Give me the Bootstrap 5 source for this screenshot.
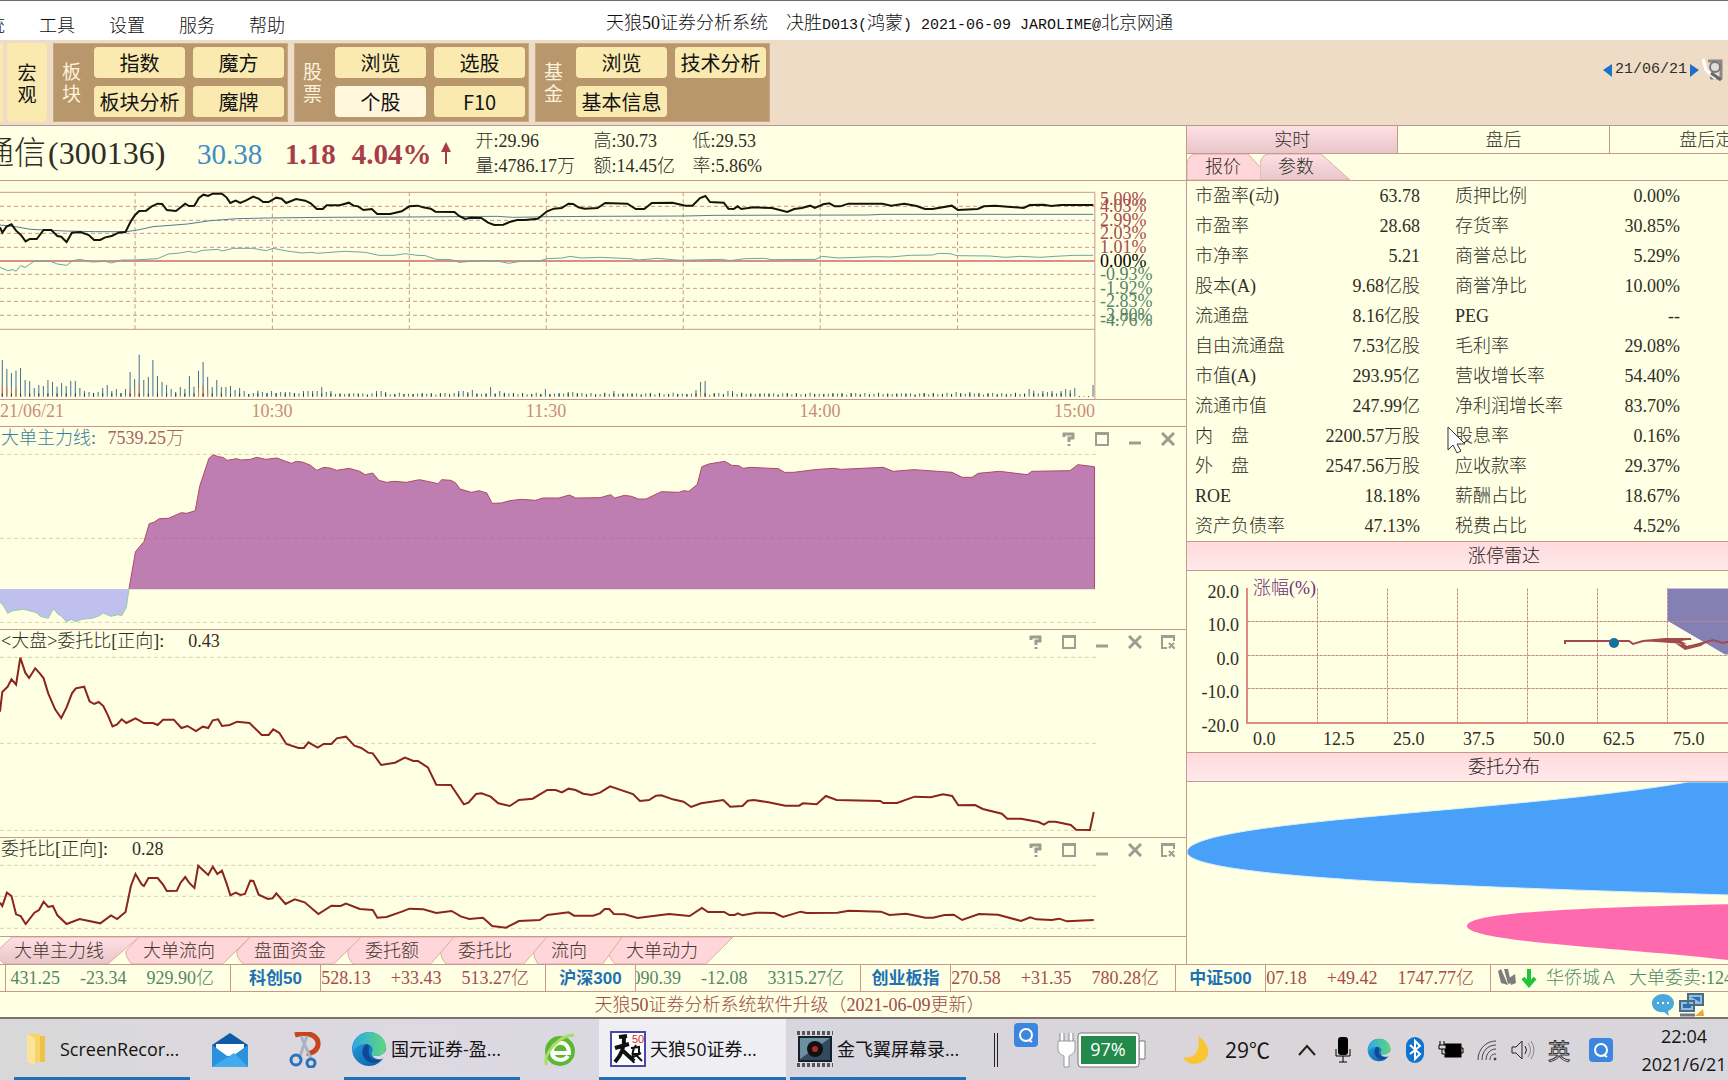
<!DOCTYPE html>
<html lang="zh-CN">
<head>
<meta charset="utf-8">
<meta name="viewport" content="width=device-width, initial-scale=1">
<title>天狼50证券分析系统</title>
<link href="https://cdn.jsdelivr.net/npm/bootstrap@5.3.0/dist/css/bootstrap.min.css" rel="stylesheet">
<script src="https://cdn.jsdelivr.net/npm/bootstrap@5.3.0/dist/js/bootstrap.bundle.min.js"></script>
<style>
:root{--rule:#c9988c;--cream:#ffffe3;--ink:#2e2e28;--pink:#ffd7da}
body{font-family:"Liberation Serif","Noto Sans CJK SC",serif;font-weight:300;font-size:18px;line-height:26px;color:var(--ink);background:var(--cream);overflow:hidden}
button{font:inherit;color:inherit;background:none;border:0;padding:0}
a{color:inherit;text-decoration:none}
.mono{font-family:"Liberation Mono",monospace;font-size:15px}
.rule-b{border-bottom:1px solid var(--rule)}
.rule-r{border-right:1px solid var(--rule)}
.clip{overflow:hidden;white-space:nowrap}
svg{display:block}
/* menu bar */
.menubar{height:40px;background:#fff;border-top:1px solid #6d6b6d;color:#101010;position:relative}
.menus{gap:34px;margin-left:-31px;padding-top:12px}
.apptitle{padding-top:9px;left:0;right:0;margin-left:51px}
/* toolbar */
.toolbar{height:86px;background:#eedcc6;border-bottom:1px solid #b39a90;padding:3px 0 3px;gap:6px;font-family:"Noto Sans CJK SC",sans-serif}
.chip{background:#faeab0;border-radius:4px;color:#141414;font-size:20px;line-height:28px;font-weight:400}
.chip.on{background:#fff6dc}
.chip-tall{width:40px;font-size:19px;line-height:22px}
.chip-edge{width:3px;margin-right:-2px}
.tgroup{background:#b8976c;border:1px solid #c9a985;width:235px;padding:3px 3px 4px 8px;gap:13px}
.tlabel{color:#fdf3da;font-size:19px;line-height:22px;width:19px;font-weight:400}
.tgrid{display:grid;grid-template-columns:1fr 1fr;grid-template-rows:31px 31px;gap:8px;width:190px}
.datepick{padding:15px 2px 0 0;gap:2px;line-height:24px}
/* layout */
.leftcol{flex:1186 1 0;min-width:0}
.rightcol{flex:541 1 0;min-width:0;border-left:1px solid var(--rule)}
.rightwide{width:634px}
/* quote header */
.quote{height:55px;gap:0;white-space:nowrap}
.qname{font-size:32px;line-height:54px;width:201px;margin-left:-19px;padding-left:1px}
.qname span{margin-left:2px}
.qnum{font-size:29px;line-height:56px}
.qlast{color:#3f8cc8;width:88px;margin-left:15px}
.qup{color:#a83c4a;font-weight:700}
.qstats{display:grid;grid-template-columns:118px 99px auto;line-height:23px;margin-left:24px;padding-top:4px}
/* charts */
.plotw{flex:1 1 0;min-width:0}
.axisw{flex:0 0 90px;position:relative}
.axisw span{position:absolute;left:4px;line-height:18px}
.up{color:#a54c4e}.dn{color:#548668}
.chart{width:100%}
.chart *{vector-effect:non-scaling-stroke;fill:none}
.gd{stroke:#c9988a;stroke-dasharray:4 3}
.gl{stroke:#d8d4b4;stroke-dasharray:4 3}
.times{color:#c88c7e;width:calc(100% - 91px);height:26px;line-height:22px;text-align:center}
.phead{height:24px;line-height:23px;padding-left:1px;padding-right:2px}
.phead button{width:33px;display:flex;justify-content:center}
.phead svg{width:14px;height:14px;fill:none;stroke:#9b9e92;stroke-width:2}
/* slanted tabs */
.stabs{height:27px}
.stab{position:relative;padding:0 21px 0 18px;line-height:28px;color:#45342f}
.stab svg{position:absolute;left:0;top:0;width:calc(100% + 14px);height:27px;z-index:-1}
.stab path{fill:var(--pink);stroke:#d9aea4;vector-effect:non-scaling-stroke}
.stab.on path{fill:url(#tabOn)}
/* right panel */
.rtabs{height:28px}
.rtabs button{width:212px;line-height:26px}
.rtabs .on{background:linear-gradient(#ffe0e4,#e8c6ca)}
.rsub{height:27px;position:relative}
.rsub button{position:relative;padding-left:18px;line-height:27px;width:73px;text-align:left}
.rsub svg{position:absolute;left:0;top:0;z-index:-1}
.facts{width:485px;margin-left:8px;line-height:29px}
.facts td,.facts th{padding:1px 0 0;font-weight:300;height:30px}
.band{height:30px;border-top:1px solid var(--rule);border-bottom:1px solid var(--rule);background:linear-gradient(#ffdadd,#ffe9ea);text-align:center;line-height:29px;color:#2a1c1c}
.band-t{fill:#2e2e28;font-size:18px}
/* ticker */
.ticker{border-top:1px solid var(--rule);height:28px;line-height:27px}
.tname{width:90px;text-align:center;color:#1d72b4;font-family:"Liberation Sans","Noto Sans CJK SC",sans-serif;font-size:17px;font-weight:700}
.tvals{width:225px;gap:20px;padding-right:16px}
.notice{height:27px;border-bottom:2px solid #80706e;color:#9a4c4a;position:relative;line-height:26px}
.notice .trayico{position:absolute;right:23px;top:1px;gap:4px}
/* taskbar */
.taskbar{height:61px;background:linear-gradient(90deg,#d9d8d8,#dcd9e2 25%,#d7d6de 50%,#dad5d8 75%,#d8d7dc);font-family:"Open Sans","Noto Sans CJK SC",sans-serif;font-size:18px;color:#141414;font-weight:400;padding-left:14px}
.task{height:61px;width:176px;border-bottom:3px solid #1f70b8;padding:2px 0 0 7px;gap:4px}
.task.on{width:187px;background:#efeef3;padding-left:11px}
.pin{width:71px;height:61px}
.tasks{gap:4px;flex:none}
.slot{width:36px;display:flex;justify-content:center}
.clock{width:118px;line-height:28px;font-size:18px}
.ime{font-size:22px;color:#fff;-webkit-text-stroke:1px #333}
.sep{border-left:1px solid #222;border-right:1px solid #222;width:4px;height:34px;margin-left:28px}
.mouse{position:absolute;left:260px;top:300px}
</style>
</head>
<body>
<svg width="0" height="0" class="position-absolute">
  <defs>
    <linearGradient id="edgeA" x1="0" y1="0" x2="1" y2="1"><stop offset="0" stop-color="#2aa4e0"/><stop offset="1" stop-color="#0b57a4"/></linearGradient>
    <linearGradient id="edgeB" x1="0" y1="0" x2="1" y2="0"><stop offset="0" stop-color="#2fa9e6"/><stop offset="1" stop-color="#5fd87c"/></linearGradient>
    <linearGradient id="tabOn" x1="0" y1="0" x2="0" y2="1"><stop offset="0" stop-color="#ffe0e4"/><stop offset="1" stop-color="#e8c6ca"/></linearGradient>
    <symbol id="edge" viewBox="0 0 36 36">
      <circle cx="18" cy="18" r="17" fill="url(#edgeA)"/>
      <path d="M2 15C4 5 12 1 18 1c11 0 17 8 17 15 0 6-5 9-10 9-4 0-5-2-4-4 2-4-1-8-6-8-6 0-11 3-13 8z" fill="url(#edgeB)"/>
      <path d="M14 14c-3 3-4 9 0 14 5 6 13 4 17 0-5 2-12 1-13-5-1-4 1-6 0-8-1-2-3-2-4-1z" fill="#0c4a94"/>
      <path d="M21 21c-1 2 0 4 4 4 4 0 8-2 10-6v6l-4 3c-5 1-11-1-10-7z" fill="#dcd9e0"/>
    </symbol>
    <symbol id="qapp" viewBox="0 0 24 24"><rect width="24" height="24" rx="4" fill="#3d86e0"/><circle cx="12" cy="12" r="6" fill="none" stroke="#fff" stroke-width="2"/><path d="M15 17l3 2" stroke="#fff" stroke-width="2"/></symbol>
    <symbol id="i-help" viewBox="0 0 14 14"><path d="M2 5V1M1 2h11M11 1v6M12 6H7v4M7 12v2" stroke-width="3"/></symbol>
    <symbol id="i-max" viewBox="0 0 14 14"><path d="M1 1h12v12H1zM1 2h12"/></symbol>
    <symbol id="i-min" viewBox="0 0 14 14"><path d="M1 11h12" stroke-width="3"/></symbol>
    <symbol id="i-x" viewBox="0 0 14 14"><path d="M1 1l12 12M13 1L1 13" stroke-width="3"/></symbol>
    <symbol id="i-pop" viewBox="0 0 14 14"><path d="M6 13H1V1h12v5M1 2h12M8 8l6 6M13 8l-5 5"/></symbol>
  </defs>
</svg>

<header class="menubar">
  <div class="apptitle position-absolute text-center">天狼50证券分析系统&ensp;&ensp;决胜<span class="mono">D013(</span>鸿蒙<span class="mono">) 2021-06-09 JAROLIME@</span>北京网通</div>
  <nav class="menus d-flex position-relative">
    <button>系统</button><button>工具</button><button>设置</button><button>服务</button><button>帮助</button>
  </nav>
</header>

<div class="toolbar d-flex">
  <div class="chip chip-edge"></div>
  <button class="chip chip-tall">宏<br>观</button>
  <div class="tgroup d-flex align-items-center"><div class="tlabel">板块</div>
    <div class="tgrid"><button class="chip">指数</button><button class="chip">魔方</button><button class="chip">板块分析</button><button class="chip">魔牌</button></div></div>
  <div class="tgroup d-flex align-items-center"><div class="tlabel">股票</div>
    <div class="tgrid"><button class="chip">浏览</button><button class="chip">选股</button><button class="chip on">个股</button><button class="chip">F10</button></div></div>
  <div class="tgroup d-flex align-items-center"><div class="tlabel">基金</div>
    <div class="tgrid"><button class="chip">浏览</button><button class="chip">技术分析</button><button class="chip">基本信息</button></div></div>
  <div class="datepick d-flex align-items-start ms-auto">
    <button aria-label="前一日"><svg width="11" height="24"><path d="M10 6v13L1 12z" fill="#1d72c8"/></svg></button>
    <span class="mono">21/06/21</span>
    <button aria-label="后一日"><svg width="11" height="24"><path d="M1 6v13l9-7z" fill="#1d72c8"/></svg></button>
    <svg width="24" height="24"><path d="M6 3h13v17H8" fill="none" stroke="#8d8784" stroke-width="3"/><circle cx="13" cy="9" r="5" fill="#ddd" stroke="#777" stroke-width="2"/><path d="M1 1l3 11 10 9" fill="none" stroke="#fff" stroke-width="3"/><path d="M9 15l10 7" stroke="#666" stroke-width="3"/></svg>
  </div>
</div>

<main class="d-flex">
  <section class="leftcol">
    <div class="quote d-flex rule-b">
      <div class="qname">通信<span>(300136)</span></div>
      <div class="qnum qlast">30.38</div>
      <div class="qnum qup me-3">1.18</div>
      <div class="qnum qup">4.04%</div>
      <svg width="12" height="54" class="ms-2"><path d="M6 38V20" stroke="#a83c4a" stroke-width="2"/><path d="M1 26l5-10 5 10z" fill="#a83c4a"/></svg>
      <div class="qstats"><span>开:29.96</span><span>高:30.73</span><span>低:29.53</span><span>量:4786.17万</span><span>额:14.45亿</span><span>率:5.86%</span></div>
    </div>

    <div class="d-flex rule-b">
      <div class="plotw">
        <svg class="chart" height="218" viewBox="0 3 2865 654" preserveAspectRatio="none">
          <path d="M0 37H2862V657M0 448H2862" stroke="#c9988c"/>
          <path class="gd" d="M0 79H2862M0 121H2862M0 160H2862M0 202H2862M0 283H2862M0 325H2862M0 364H2862M0 406H2862M353 37V448M712 37V448M1070 37V448M1428 37V448M1786 37V448M2144 37V448M2503 37V448"/>
          <path d="M0 243H2862" stroke="#d98f86" stroke-width="2"/>
          <polyline stroke="#6ea6a4" points="0,262 20,272 34,269 42,274 54,257 66,262 90,243 130,243 150,252 174,256 190,242 210,238 240,246 276,244 292,249 318,240 350,240 412,236 440,222 470,219 494,214 508,218 530,211 570,208 580,213 610,205 660,205 696,212 714,205 750,213 790,219 815,217 830,220 900,214 955,217 990,226 1030,226 1060,221 1090,226 1112,227 1140,238 1180,239 1200,247 1250,242 1300,243 1330,250 1360,244 1410,243 1430,236 1470,234 1490,229 1520,234 1568,232 1648,236 1668,240 1718,235 1778,241 1888,238 1908,242 1948,236 1998,235 2018,239 2133,238 2148,229 2193,234 2288,230 2328,231 2378,226 2438,225 2453,220 2483,221 2503,227 2588,228 2628,232 2668,229 2718,232 2758,229 2808,226 2858,226"/>
          <polyline stroke="#4d8090" points="0,135 40,140 80,148 170,153 250,155 330,155 360,150 400,140 490,132 550,122 620,116 700,114 850,112 1060,111 1300,109 1340,112 1440,110 1568,109 1788,108 1868,106 2268,105 2308,103 2858,103"/>
          <polyline stroke="#141408" stroke-width="2" points="0,142 6,158 17,140 30,133 42,152 54,164 67,184 78,177 96,177 114,150 134,150 150,168 160,170 174,186 188,158 210,156 232,165 246,180 262,180 275,172 292,168 310,158 328,156 342,124 353,105 364,93 382,92 398,78 412,71 424,72 436,90 460,93 484,71 494,78 508,77 520,54 532,44 544,48 556,41 580,41 592,52 602,69 616,62 628,69 642,62 662,50 676,56 688,66 702,66 722,53 736,56 748,69 774,57 798,62 812,70 828,87 844,87 854,76 888,76 912,68 924,77 936,79 950,90 972,87 986,102 1020,102 1050,94 1070,79 1092,77 1106,82 1126,86 1138,95 1188,96 1200,108 1216,117 1230,113 1258,114 1276,128 1292,135 1316,134 1332,126 1352,120 1372,120 1406,116 1430,94 1448,86 1468,84 1486,71 1498,72 1512,82 1528,86 1562,84 1582,69 1640,71 1662,87 1684,87 1704,69 1758,68 1792,77 1810,77 1830,54 1844,48 1856,66 1892,68 1904,86 1918,87 1928,79 1938,87 1970,82 2018,84 2058,96 2076,87 2096,84 2118,77 2130,84 2152,73 2168,70 2182,79 2196,79 2218,71 2306,71 2330,77 2364,71 2396,78 2418,87 2438,87 2488,77 2504,90 2556,87 2572,79 2602,77 2634,80 2676,84 2692,75 2728,74 2748,78 2774,75 2858,75"/>
          <g id="vol"></g>
        </svg>
      </div>
      <div class="axisw" id="pct"></div>
    </div>
    <div class="rule-b">
      <div class="times d-flex">
        <span class="text-start" style="flex:135 1 0">21/06/21</span><span style="flex:274 1 0">10:30</span><span style="flex:274 1 0">11:30</span><span style="flex:274 1 0">14:00</span><span class="text-end" style="flex:138 1 0">15:00</span>
      </div>
    </div>

    <div class="rule-b">
      <div class="phead d-flex"><span style="color:#3c7f9c">大单主力线:</span><span class="ms-2" style="color:#a5665e">&thinsp;7539.25万</span>
        <span class="d-flex align-items-center ms-auto"><button aria-label="帮助"><svg><use href="#i-help"/></svg></button><button aria-label="最大化"><svg><use href="#i-max"/></svg></button><button aria-label="最小化"><svg><use href="#i-min"/></svg></button><button aria-label="关闭"><svg><use href="#i-x"/></svg></button></span></div>
      <svg class="chart" height="178" viewBox="0 78 3099 534" preserveAspectRatio="none">
        <path class="gl" d="M0 88H2864M0 340H2864M0 592H2864"/>
        <polygon style="fill:#c0c0ee" points="0,492 0,532 8,540 20,565 34,557 62,553 96,563 104,573 126,580 140,551 150,566 162,575 174,591 186,583 198,590 214,583 244,579 260,572 270,564 290,574 308,569 318,572 330,548 337,492"/>
        <polyline stroke="#8fd0a0" points="0,532 8,540 20,565 34,557 62,553 96,563 104,573 126,580 140,551 150,566 162,575 174,591 186,583 198,590 214,583 244,579 260,572 270,564 290,574 308,569 318,572 330,548 337,492"/>
        <path style="fill:#bf7eb1" stroke="#b0486a" d="M337,492 354,380 376,350 390,296 402,292 416,281 440,280 474,263 488,265 510,257 522,183 546,100 558,89 570,95 582,97 594,106 618,101 630,105 655,103 670,97 695,103 724,99 744,108 762,115 774,109 790,111 810,120 828,136 846,127 862,129 880,136 912,130 940,139 954,149 974,144 990,166 1010,172 1030,169 1062,172 1096,164 1145,176 1154,164 1178,166 1190,173 1202,192 1232,202 1252,197 1272,204 1286,235 1310,234 1332,227 1362,223 1400,226 1418,219 1460,219 1488,210 1504,219 1568,218 1596,209 1606,219 1632,211 1650,214 1668,222 1688,222 1728,200 1774,202 1786,197 1800,199 1822,178 1834,125 1852,117 1894,109 1912,121 1930,122 1942,130 1960,127 2034,131 2050,142 2074,142 2128,134 2178,130 2198,133 2308,127 2334,139 2388,134 2488,142 2514,157 2540,157 2556,145 2612,139 2684,149 2696,139 2796,137 2816,119 2860,125 2860,492"/>
        <path d="M384 340H2860" stroke="#b56fa4" stroke-dasharray="4 3"/><path d="M337 490H2860" stroke="#b584ac" stroke-width="2"/>
      </svg>
    </div>

    <div class="rule-b">
      <div class="phead d-flex"><span>&lt;大盘&gt;委托比[正向]:</span><span style="margin-left:24px">0.43</span>
        <span class="d-flex align-items-center ms-auto"><button aria-label="帮助"><svg><use href="#i-help"/></svg></button><button aria-label="最大化"><svg><use href="#i-max"/></svg></button><button aria-label="最小化"><svg><use href="#i-min"/></svg></button><button aria-label="关闭"><svg><use href="#i-x"/></svg></button><button aria-label="弹出"><svg><use href="#i-pop"/></svg></button></span></div>
      <svg class="chart" height="183" viewBox="0 72 3099 549" preserveAspectRatio="none">
        <path class="gl" d="M0 82H2864M0 340H2864M0 601H2864"/>
        <polyline stroke="#8a241c" stroke-width="2" points="0,245 6,186 20,170 30,148 42,164 53,83 66,128 76,144 92,115 104,130 114,145 126,190 144,238 160,264 174,232 188,190 198,175 220,170 234,214 246,222 258,216 270,228 282,256 294,289 306,283 318,268 330,279 354,265 376,279 400,279 412,285 426,269 454,269 474,294 490,288 512,303 530,290 544,294 556,271 570,268 580,288 600,285 620,275 652,279 684,315 702,315 714,298 730,309 748,342 780,354 794,354 806,337 830,353 846,342 866,342 880,325 904,320 926,347 944,354 962,368 974,370 996,405 1032,398 1058,383 1080,393 1092,393 1118,412 1140,464 1178,465 1212,523 1224,518 1244,492 1258,490 1282,500 1302,520 1332,528 1356,510 1392,506 1430,480 1452,480 1468,487 1486,476 1504,480 1524,491 1546,495 1568,488 1594,469 1654,492 1672,513 1696,510 1714,497 1728,496 1758,508 1786,515 1806,531 1832,520 1890,510 1908,530 1940,528 1954,512 1970,510 2008,517 2052,527 2088,527 2098,520 2134,523 2158,498 2186,510 2300,513 2308,519 2344,519 2390,500 2432,502 2464,493 2488,498 2504,526 2548,525 2568,537 2618,551 2632,566 2668,566 2714,576 2728,584 2740,575 2758,575 2798,585 2812,599 2848,600 2858,546"/>
      </svg>
    </div>

    <div class="rule-b">
      <div class="phead d-flex"><span>委托比[正向]:</span><span style="margin-left:24px">0.28</span>
        <span class="d-flex align-items-center ms-auto"><button aria-label="帮助"><svg><use href="#i-help"/></svg></button><button aria-label="最大化"><svg><use href="#i-max"/></svg></button><button aria-label="最小化"><svg><use href="#i-min"/></svg></button><button aria-label="关闭"><svg><use href="#i-x"/></svg></button><button aria-label="弹出"><svg><use href="#i-pop"/></svg></button></span></div>
      <svg class="chart" height="74" viewBox="0 696 3099 222" preserveAspectRatio="none">
        <path class="gl" d="M0 706H2864M0 799H2864M0 895H2864"/>
        <polyline stroke="#8a241c" stroke-width="2" points="0,818 6,828 18,788 30,798 42,853 54,858 67,882 90,848 102,840 114,815 126,831 138,828 150,856 174,882 208,867 262,880 290,856 306,867 328,846 342,768 354,732 370,763 376,768 388,744 412,744 426,764 436,783 462,782 472,758 484,741 494,758 508,774 518,707 530,720 544,735 556,710 568,732 580,722 592,760 602,796 616,788 628,795 640,792 654,752 662,753 676,794 700,807 712,805 722,790 746,822 770,808 796,817 832,852 866,827 890,828 904,821 940,837 974,840 986,863 1010,861 1050,845 1070,836 1106,838 1140,849 1180,843 1204,859 1226,867 1262,863 1286,888 1322,893 1356,873 1410,870 1430,855 1486,847 1500,857 1550,857 1568,850 1580,837 1592,837 1604,852 1632,853 1666,864 1748,852 1802,858 1834,834 1850,846 1892,846 1906,855 1920,855 1928,850 1940,856 1976,848 2024,849 2046,861 2092,845 2108,849 2188,848 2218,842 2302,845 2324,855 2368,851 2418,863 2438,863 2468,855 2492,854 2514,870 2558,852 2608,854 2668,873 2692,862 2708,868 2748,870 2768,866 2788,874 2858,870"/>
      </svg>
    </div>

    <nav class="stabs d-flex position-relative" id="stabs" style="margin-left:-4px;z-index:0"></nav>
  </section>

  <aside class="rightcol clip position-relative">
    <div class="rightwide">
      <div class="rtabs d-flex rule-b"><button class="on rule-r">实时</button><button class="rule-r">盘后</button><button>盘后定价</button></div>
      <div class="rsub d-flex rule-b" style="z-index:0">
        <button><svg width="76" height="26"><path d="M0 26V9Q2 1 8 0H61L74 14V26z" fill="#ffd7da" stroke="#d9aea4"/></svg>报价</button>
        <button><svg width="92" height="26"><path d="M0 26V9Q2 1 8 0H61L90 26z" fill="url(#tabOn)" stroke="#d9aea4"/></svg>参数</button>
      </div>
      <table class="facts">
        <colgroup><col style="width:113px"><col style="width:112px"><col style="width:148px"><col style="width:112px"></colgroup>
        <tbody id="facts"></tbody>
      </table>
      <div class="band">涨停雷达</div>
      <svg width="634" height="181">
        <path d="M480 50L541 84H480z" fill="#fff"/>
        <path d="M480 50V84H538z" fill="#ffffe3"/>
        <path d="M480 17H634V84H538L480 50z" fill="#8480b4" stroke="#fff"/>
        <path d="M130 17V152M200 17V152M270 17V152M340 17V152M410 17V152M480 17V152M60 50H634M60 84H634M60 117H634" transform="translate(.5 .5)" stroke="#c08a80" stroke-dasharray="3 1" fill="none"/>
        <path d="M60 17V152H634" stroke="#e08a86" stroke-width="2" fill="none"/>
        <path d="M378 73v-3h64l4 3 10-3 22-2 26 0M478 70l14 1 8 5 12-3 14-4 10 3 12-3" stroke="#a04a50" stroke-width="2" fill="none"/>
        <path d="M454 70l20-2 32 0-12 2 6 3-16-1zM488 72l12 3 20-4-6 4-16 4z" fill="#a04a50"/>
        <circle cx="427" cy="72" r="5" fill="#12709c"/>
        <g class="band-t"><g text-anchor="end"><text x="52" y="27">20.0</text><text x="52" y="60">10.0</text><text x="52" y="94">0.0</text><text x="52" y="127">-10.0</text><text x="52" y="161">-20.0</text></g>
        <text x="66" y="174">0.0</text><text x="136" y="174">12.5</text><text x="206" y="174">25.0</text><text x="276" y="174">37.5</text><text x="346" y="174">50.0</text><text x="416" y="174">62.5</text><text x="486" y="174">75.0</text></g>
        <text x="66" y="23" font-size="18" fill="#70307a">涨幅(%)</text>
      </svg>
      <div class="band">委托分布</div>
      <svg width="634" height="182">
        <path d="M501 0C330 30 0 38 0 70C0 98 330 106 541 113L634 116V0z" fill="#48a0f8" stroke="#d8f0fb"/>
        <path d="M634 120C480 124 280 126 280 144C280 160 440 166 541 178L634 190z" fill="#ff6aae"/>
      </svg>
    </div>
    <svg class="mouse" width="20" height="30" viewBox="0 0 20 30"><path d="M1 1V24L6 19L10 27L14 25L10 18H18z" fill="#fff" stroke="#333"/></svg>
  </aside>
</main>

<div class="ticker d-flex rule-b clip">
  <div class="rule-r" style="width:6px;flex:none"></div>
  <div class="d-flex flex-shrink-0" id="ticker"></div>
  <div class="d-flex flex-shrink-0 align-items-center dn" style="padding-left:6px">
    <svg width="20" height="24"><path d="M1 5l3-2 7 16-7-2zM7 3l4 0 3 14-3 1zM12 12l6-4 1 9-5 2z" fill="#7d7d7d"/></svg>
    <svg width="16" height="24" class="mx-1"><path d="M8 3v15M2 12l6 7 6-7" stroke="#22c43a" stroke-width="4" fill="none"/></svg>
    <span style="margin-left:5px">华侨城Ａ</span><span style="margin-left:11px">大单委卖:1247万</span>
  </div>
</div>
<div class="notice text-center" style="padding-right:149px">天狼50证券分析系统软件升级（2021-06-09更新）
  <div class="trayico d-flex">
    <svg width="24" height="24"><path d="M12 1c6 0 11 4 11 9 0 4-3 7-6 8l1 5-5-4C6 20 1 16 1 10 1 5 6 1 12 1z" fill="#4aa8de"/><path d="M6 10h2M11 10h2M16 10h2" stroke="#fff" stroke-width="2"/></svg>
    <svg width="26" height="24"><path d="M9 1h15v11H9zM1 8h14v10H1z" fill="#8cc0e8" stroke="#506a80" stroke-width="2"/><path d="M12 4h9v5M4 11h8v4H4z" fill="#2f6db0"/><path d="M1 22h15" stroke="#6a7a88" stroke-width="3"/><path d="M24 16l1 7h-9z" fill="#e8a83a"/></svg>
  </div>
</div>

<footer class="taskbar d-flex align-items-center clip">
  <div class="tasks d-flex">
    <button class="task d-flex align-items-center"><svg width="35" height="34"><path d="M6 2h14v28H6z" fill="#f7d468"/><path d="M6 2l8 4v27l-8-3z" fill="#fbe49a"/><path d="M19 4h5v26h-5z" fill="#efc04a"/></svg>ScreenRecor...</button>
    <button class="pin d-flex align-items-center justify-content-center" aria-label="邮件"><svg width="36" height="34"><path d="M0 12L18 0 36 12V32H0z" fill="#0f5ba8"/><path d="M4 11h28v12H4z" fill="#fff"/><path d="M0 12l18 13L36 12V34H0z" fill="#2a92dc"/><path d="M0 34l22-14 14 14z" fill="#43aaf0"/></svg></button>
    <button class="pin d-flex align-items-center justify-content-center" aria-label="截图工具"><svg width="32" height="36" fill="none"><path d="M6 3C22-2 30 6 29 13 28 19 22 22 18 21" stroke="#c8441c" stroke-width="5"/><path d="M12 4l10 23M18 4L10 27" stroke="#aab4c0" stroke-width="3"/><circle cx="7" cy="28" r="5" stroke="#2a72c0" stroke-width="3"/><circle cx="22" cy="31" r="4" stroke="#2a72c0" stroke-width="3"/></svg></button>
    <button class="task d-flex align-items-center"><svg width="36" height="36"><use href="#edge"/></svg>国元证券-盈...</button>
    <button class="pin d-flex align-items-center justify-content-center" aria-label="浏览器"><svg width="34" height="36" fill="none"><circle cx="17" cy="19" r="15" fill="#5cb832"/><path d="M8 21h18c0-14-17-13-17-1 0 9 12 10 16 4" stroke="#fff" stroke-width="4"/><path d="M4 33C-2 24 16 3 31 3" stroke="#a8dc6a" stroke-width="3"/></svg></button>
    <button class="task on d-flex align-items-center"><svg width="36" height="36"><rect x="1" y="1" width="34" height="34" fill="#fff" stroke="#4a48a8" stroke-width="2"/><path d="M9 6l8-1M5 17l14-4M14 6q1 14-9 25M12 19l12 11" stroke="#111" stroke-width="4" fill="none"/><path d="M26 14q-6 8-2 18M21 17l8-1v7h-7M25 23l7 7M31 22l-8 4" stroke="#111" stroke-width="2" fill="none"/><text x="22" y="12" font-size="11" fill="#d22" font-family="Liberation Sans">50</text></svg>天狼50证券...</button>
    <button class="task d-flex align-items-center"><svg width="36" height="36"><path d="M0 2h36M0 34h36" stroke="#555" stroke-width="4" stroke-dasharray="3 2"/><rect x="2" y="6" width="32" height="24" fill="#324a5c" stroke="#15202a" stroke-width="2"/><path d="M3 7h30L3 28z" fill="#6d8fa4"/><circle cx="18" cy="18" r="8" fill="#111"/><circle cx="18" cy="18" r="3" fill="#b02a2a"/></svg>金飞翼屏幕录...</button>
  </div>
  <div class="sep flex-shrink-0"></div>
  <button class="align-self-start flex-shrink-0" style="margin:4px 19px 0 16px" aria-label="Q"><svg width="24" height="24"><use href="#qapp"/></svg></button>
  <svg width="90" height="36" class="flex-shrink-0"><path d="M5 1v9M14 1v9" stroke="#888" stroke-width="5"/><path d="M5 1v9M14 1v9" stroke="#fff" stroke-width="3"/><path d="M1 9h17v8c0 5-5 6-6 7v11H7V24c-1-1-6-2-6-7z" fill="#fff" stroke="#999"/><path d="M82 9h6v18h-6z" fill="#fff" stroke="#777"/><rect x="21" y="1" width="61" height="34" rx="3" fill="#fff" stroke="#777"/><rect x="24" y="4" width="55" height="28" fill="#238a4c"/><text x="51" y="24" text-anchor="middle" font-size="18" fill="#fff">97%</text></svg>
  <button class="d-flex align-items-center flex-shrink-0" style="margin:0 19px 0 36px;font-size:21px"><svg width="26" height="28" style="margin-right:16px"><path d="M15 0c16 10 12 27-3 28-6 0-10-3-12-7 12 3 18-8 15-21z" fill="#f8c632"/></svg><span>29℃</span></button>
  <div class="d-flex align-items-center flex-shrink-0">
    <button class="slot" aria-label="展开"><svg width="20" height="12" fill="none"><path d="M2 11l8-9 8 9" stroke="#222" stroke-width="2"/></svg></button>
    <span class="slot"><svg width="16" height="26"><rect x="3" width="10" height="18" rx="3" fill="#000"/><path d="M1 12v7h14v-7M8 19v6M4 25h8" stroke="#000" fill="none"/></svg></span>
    <span class="slot"><svg width="24" height="24"><use href="#edge"/></svg></span>
    <span class="slot"><svg width="18" height="26"><rect width="18" height="26" rx="9" fill="#0f74cc"/><path d="M4 8l10 9-5 5V4l5 5-10 8" stroke="#fff" stroke-width="2" fill="none"/></svg></span>
    <span class="slot"><svg width="26" height="20"><rect x="7" y="4" width="16" height="13" fill="#000" stroke="#000"/><path d="M23 8h2v5h-2" stroke="#000" fill="none"/><path d="M2 1v4M6 1v4M1 5h7v4H1zM4 9v5h4" stroke="#000" fill="#dad7db"/></svg></span>
    <span class="slot"><svg width="22" height="22" fill="none" stroke="#444"><path d="M2 21C2 10 10 2 20 2M6 21C6 12 12 6 20 6M10 21c0-6 4-11 10-11M14 21c0-4 2-6 6-6"/><circle cx="19" cy="20" r="1" fill="#000"/></svg></span>
    <span class="slot"><svg width="24" height="20" fill="none" stroke="#222"><path d="M1 7h4l6-6v18l-6-6H1z"/><path d="M14 6q3 4 0 8"/><path d="M17 3q5 7 0 14M20 1q6 9 0 18" stroke="#888"/></svg></span>
    <span class="slot ime">英</span>
    <span class="slot" style="width:48px"><svg width="24" height="24"><use href="#qapp"/></svg></span>
    <button class="clock text-center">22:04<br>2021/6/21</button>
  </div>
</footer>

<script>
// one-minute volume: bar tops in chart units, baseline at 650
const tops=[540,567,579,572,564,600,603,624,615,618,600,606,620,609,618,603,603,624,633,636,639,636,624,615,633,627,639,627,576,597,524,600,591,540,588,606,615,627,636,621,627,588,620,572,546,591,621,600,621,621,618,630,624,633,642,639,632,636,639,633,639,636,636,636,639,640,633,633,633,633,621,636,633,642];
const peaks={82:633,83:633,84:636,100:633,101:633,102:636,103:630,107:621,109:633,110:638,119:627,124:636,125:636,134:633,152:630,153:606,154:603,159:633,160:633,209:636,210:640,212:636,225:627,226:632,228:633,229:636,230:633,232:633,233:627,234:630,235:624,236:648,237:648,238:648,239:615};
let blue='',red='',dark='';
for(let i=0;i<240;i++){
  const x=6+11.93*i, t=tops[i]??peaks[i]??(642-(i*7%5)+(i%3));
  blue+=`M${x} ${t}V650`;
  if((i<60&&i%7<4&&t<600)||i==153||i==154||i==43||i==44) red+=`M${x} ${(t+1300)/3}V650`;
  if(i%2==0) dark+=`M${x} ${Math.max(t,640)}V650`;
}
document.getElementById('vol').innerHTML=`<path d="${blue}" stroke="#3f7090"/><path d="${red}" stroke="#d07a5a"/><path d="${dark}" stroke="#333a40"/>`;
document.getElementById('pct').innerHTML=[['5.00%',18,'up'],['4.03%',25,'up'],['2.99%',39,'up'],['2.03%',52,'up'],['1.01%',66,'up'],['0.00%',80,'text-black'],['-0.93%',93,'dn'],['-1.92%',107,'dn'],['-2.83%',120,'dn'],['-3.80%',134,'dn'],['-4.76%',139,'dn']]
  .map(([t,y,c])=>`<span class="${c}" style="top:${y-9}px">${t}</span>`).join('');
document.getElementById('facts').innerHTML=[
['市盈率(动)','63.78','质押比例','0.00%'],['市盈率','28.68','存货率','30.85%'],['市净率','5.21','商誉总比','5.29%'],['股本(A)','9.68亿股','商誉净比','10.00%'],['流通盘','8.16亿股','PEG','--'],['自由流通盘','7.53亿股','毛利率','29.08%'],['市值(A)','293.95亿','营收增长率','54.40%'],['流通市值','247.99亿','净利润增长率','83.70%'],['内　盘','2200.57万股','股息率','0.16%'],['外　盘','2547.56万股','应收款率','29.37%'],['ROE','18.18%','薪酬占比','18.67%'],['资产负债率','47.13%','税费占比','4.52%']]
.map(r=>`<tr><th scope="row">${r[0]}</th><td class="text-end">${r[1]}</td><th scope="row" style="padding-left:35px">${r[2]}</th><td class="text-end">${r[3]}</td></tr>`).join('');
document.getElementById('stabs').innerHTML=['大单主力线','大单流向','盘面资金','委托额','委托比','流向','大单动力']
.map((t,i)=>`<a href="#" class="stab${i?'':' on'}" style="z-index:${9-i}"><svg viewBox="0 0 124 27" preserveAspectRatio="none"><path d="M7 27Q0 20 1 14L14 0H124L97 27z"/></svg>${t}</a>`).join('');
document.getElementById('ticker').innerHTML=[['','431.25','-23.34','929.90亿','dn'],['科创50','1528.13','+33.43','513.27亿','up'],['沪深300','5090.39','-12.08','3315.27亿','dn'],['创业板指','3270.58','+31.35','780.28亿','up'],['中证500','6707.18','+49.42','1747.77亿','up']]
.map(r=>(r[0]?`<div class="tname rule-r">${r[0]}</div>`:'')+`<div class="tvals rule-r clip d-flex justify-content-end ${r[4]}"><span>${r[1]}</span><span>${r[2]}</span><span>${r[3]}</span></div>`).join('');
</script>
</body>
</html>
